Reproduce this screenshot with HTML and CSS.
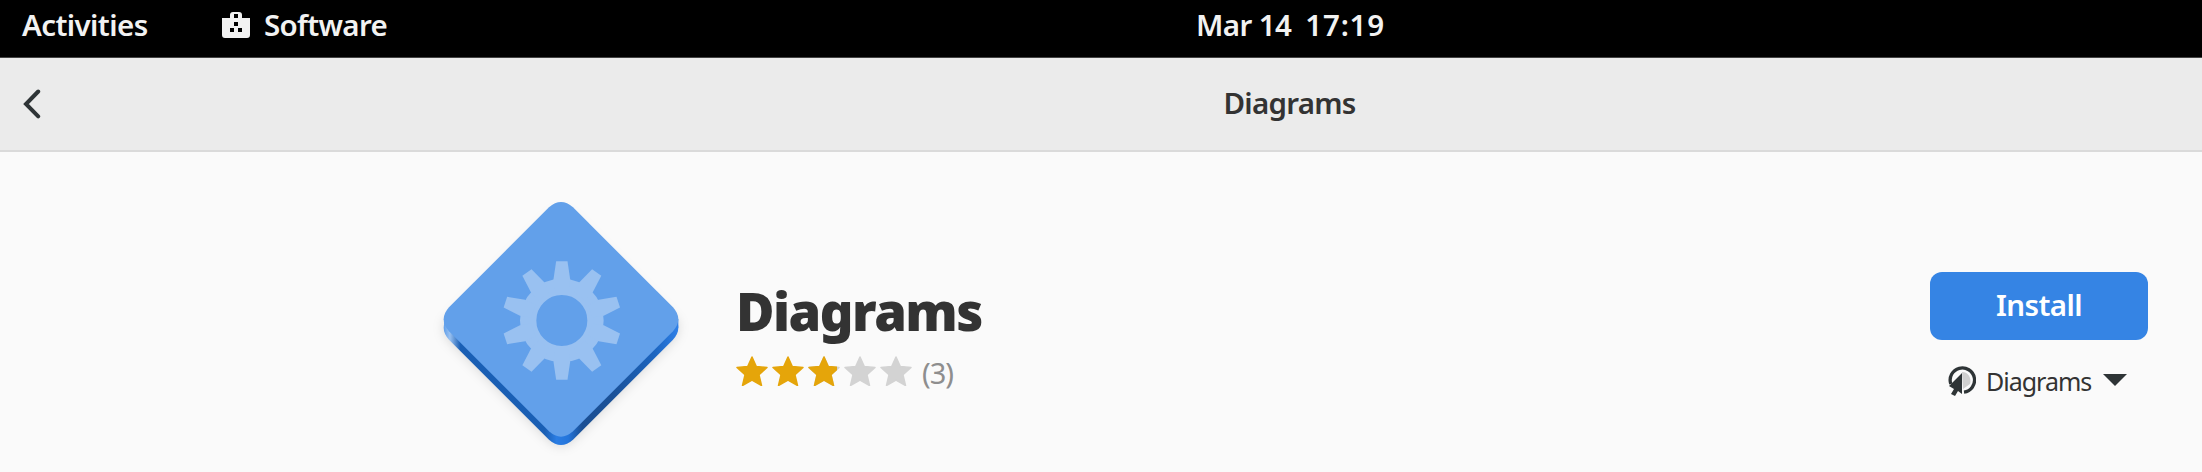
FILE: index.html
```
<!DOCTYPE html>
<html lang="en">
<head>
<meta charset="utf-8">
<title>Software</title>
<link rel="stylesheet" href="styles.css">
</head>
<body>
<header class="topbar">
  <span class="activities">Activities</span>
  <svg class="bag" viewBox="0 0 28 26"><path fill="#f2f2f2" fill-rule="evenodd" d="M8 6V3Q8 0 11 0H17Q20 0 20 3V6H28V23Q28 26 25 26H3Q0 26 0 23V6ZM12 2V6H16V2ZM12 10V14H16V10ZM8 16V20H12V16ZM16 16V20H20V16Z"/></svg>
  <span class="appname">Software</span>
  <span class="clock"><span>Mar 14</span><span class="time">17:19</span></span>
</header>
<nav class="headerbar">
  <svg class="back" viewBox="0 0 18 30"><path d="M15.2 2.5L3 15L15.2 27.3" fill="none" stroke="#2e3436" stroke-width="4" stroke-linecap="round"/></svg>
  <span class="title">Diagrams</span>
</nav>
<main class="details">
  <svg class="appicon" viewBox="0 0 780 810">
    <defs>
      <linearGradient id="edge" gradientUnits="userSpaceOnUse" x1="42" y1="0" x2="745" y2="0">
        <stop offset="0" stop-color="#62a0ea"/><stop offset=".025" stop-color="#99c1f1"/><stop offset=".07" stop-color="#1a5fb4"/><stop offset=".43" stop-color="#1a5fb4"/><stop offset=".48" stop-color="#2b7de3"/><stop offset=".53" stop-color="#2475db"/><stop offset=".59" stop-color="#1a4f94"/><stop offset=".72" stop-color="#1a5198"/><stop offset=".9" stop-color="#1c65c0"/><stop offset="1" stop-color="#2f80e8"/>
      </linearGradient>
      <path id="tooth" d="M-25-124L-17-178H17L25-124L20-90H-20Z"/>
      <path id="diamond" d="M357 52Q393 20 429 52L729 352Q761 388 729 424L429 724Q393 756 357 724L57 424Q25 388 57 352Z"/>
    </defs>
    <g class="shade" fill="url(#edge)"><use href="#diamond" y="25"/><path d="M42 388H745V413H42Z"/></g>
    <use href="#diamond" fill="#62a0ea"/>
    <g transform="translate(395.500 391.500)" fill="#99c1f1">
      <circle r="101" fill="none" stroke="#99c1f1" stroke-width="49"/>
      <use href="#tooth"/><use href="#tooth" transform="rotate(36)"/><use href="#tooth" transform="rotate(72)"/><use href="#tooth" transform="rotate(108)"/><use href="#tooth" transform="rotate(144)"/><use href="#tooth" transform="rotate(180)"/><use href="#tooth" transform="rotate(216)"/><use href="#tooth" transform="rotate(252)"/><use href="#tooth" transform="rotate(288)"/><use href="#tooth" transform="rotate(324)"/>
    </g>
  </svg>
  <section class="summary">
    <h1>Diagrams</h1>
    <div class="rating">
      <svg class="stars" viewBox="0 0 176 30">
        <defs><path id="star" d="M16 1L20.300 10.600L31 11.500L23 18.800L25.500 29.500L16 24.200L6.500 29.500L9 18.800L1 11.500L11.700 10.600Z" stroke-width="1.500" stroke-linejoin="round"/>
        <clipPath id="earned"><path d="M0 0H101V30H0Z"/></clipPath></defs>
        <g fill="#d3d3d3" stroke="#d3d3d3"><use href="#star" x="72"/><use href="#star" x="108"/><use href="#star" x="144"/></g>
        <g fill="#e5a50a" stroke="#e5a50a" clip-path="url(#earned)"><use href="#star"/><use href="#star" x="36"/><use href="#star" x="72"/></g>
      </svg>
      <span class="count">(3)</span>
    </div>
  </section>
  <aside class="actions">
    <button class="install"><span>Install</span></button>
    <div class="source">
      <svg class="origin" viewBox="0 0 28 30"><path d="M14 6A8 9 0 0 1 22 18L15 23Z" fill="#d0d0d0"/><path d="M2.800 18A12.200 12.200 0 1 1 16 26.200" fill="none" stroke="#2e3436" stroke-width="3.300"/><path d="M14 7V28L10 25L7 30L3 28L6 23L1 20Z" fill="#2e3436"/></svg>
      <span class="sourcename">Diagrams</span>
      <svg class="caret" viewBox="0 0 24 12"><path d="M0 0H24L12 12Z" fill="#2e3436"/></svg>
    </div>
  </aside>
</main>
</body>
</html>
```
FILE: styles.css
```
* { box-sizing: border-box; }
body { margin: 0; width: 2202px; height: 472px; overflow: hidden; background: #fafafa; color: #333; font-family: "Noto Sans", "Open Sans", sans-serif; }
svg { display: block; flex: none; }
span { white-space: nowrap; }
.topbar { height: 58px; background: #000; color: #f2f2f2; display: flex; font-size: 29.5px; font-weight: 600; line-height: 50px; border-bottom: 1px solid #444; }
.activities { width: 200px; padding-left: 22px; letter-spacing: -.6px; }
.bag { width: 28px; height: 26px; margin: 12px 14px 0 22px; }
.appname { width: 932px; letter-spacing: -.7px; }
.clock { display: flex; gap: 14px; letter-spacing: -.6px; }
.time { letter-spacing: .8px; }
.headerbar { height: 94px; background: #ebebeb; border-bottom: 2px solid #dadada; display: flex; align-items: flex-start; }
.back { width: 18px; height: 30px; margin: 31px 0 0 23px; }
.title { margin-left: 1182.5px; font-size: 29.5px; font-weight: 600; line-height: 90px; letter-spacing: -.75px; }
.details { display: flex; height: 320px; padding: 38px 54px 0 430px; }
.appicon { width: 260px; height: 270px; }
.shade { filter: drop-shadow(0 3px 16px #0002); }
.summary { width: 1240px; padding: 81px 0 0 46px; }
h1 { margin: 0; font-size: 52.5px; font-weight: 900; line-height: 80px; height: 84px; letter-spacing: -1.5px; white-space: nowrap; }
.rating { display: flex; }
.stars { width: 176px; height: 30px; margin-top: 1px; }
.count { margin-left: 10px; font-size: 29px; line-height: 36px; color: #8e8e8e; letter-spacing: -1px; }
.actions { width: 218px; margin-top: 82px; }
.install { display: block; width: 218px; height: 68px; padding: 0 0 3px; border: 0; border-radius: 12px; background: #3584e4; color: #fff; font: 600 29.5px/65px "Noto Sans", sans-serif; letter-spacing: -.6px; }
.source { display: flex; padding: 26px 0 0 18px; }
.origin { width: 28px; height: 30px; }
.sourcename { width: 108px; margin: 0 9px 0 10px; font-size: 25px; line-height: 30px; letter-spacing: -1px; }
.caret { width: 24px; height: 12px; margin-top: 8px; }
```
